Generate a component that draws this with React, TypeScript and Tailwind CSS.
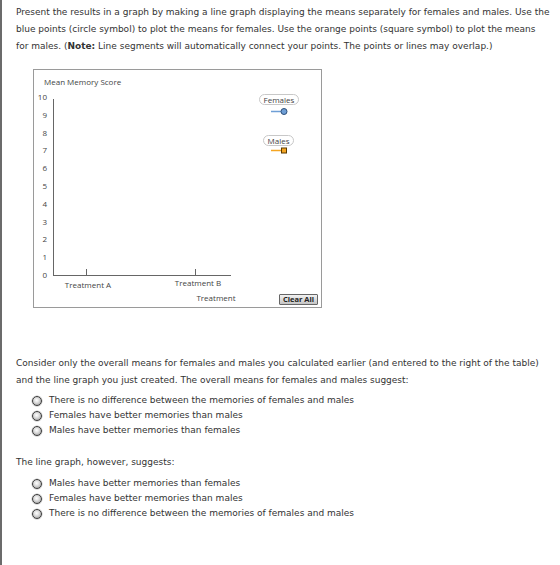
import React from "react";

const body = { fontFamily: '"DejaVu Sans", Verdana, sans-serif' };
const chartFont = '"Open Sans", "DejaVu Sans", sans-serif';

function Radio({ label }: { label: string }) {
  return (
    <label className="flex items-center h-[15px] pl-[16px]">
      <span className="w-[10px] h-[10px] rounded-full border border-[#3c3c3c] bg-[radial-gradient(circle_at_45%_40%,#ffffff_0%,#dcdcdc_40%,#8e8e8e_100%)] shadow-[0_0_0_0.5px_#bbbbbb] shrink-0" />
      <span className="ml-[7px]">{label}</span>
    </label>
  );
}

function Chart() {
  const ys = [0, 1, 2, 3, 4, 5, 6, 7, 8, 9, 10];
  const y0 = 205;
  const step = 17.8;
  return (
    <div className="relative ml-[31px] w-[289px] h-[239px] border border-[#9a9a9a] bg-white">
      <svg width="287" height="237" className="absolute left-0 top-0" style={{ fontFamily: chartFont }}>
        <text x="10" y="15" fontSize="8" fill="#444">Mean Memory Score</text>
        {ys.map((v) => (
          <text key={v} x="13" y={y0 - v * step + 3} fontSize="8" fill="#444" textAnchor="end">
            {v}
          </text>
        ))}
        <line x1="19.5" y1="29" x2="19.5" y2="205" stroke="#666" strokeWidth="1" />
        <line x1="19" y1="205.5" x2="197" y2="205.5" stroke="#666" strokeWidth="1" />
        <line x1="52.5" y1="199" x2="52.5" y2="205" stroke="#666" strokeWidth="1" />
        <line x1="161.5" y1="199" x2="161.5" y2="205" stroke="#666" strokeWidth="1" />
        <text x="54" y="218" fontSize="8" fill="#444" textAnchor="middle">Treatment A</text>
        <text x="164" y="216" fontSize="8" fill="#444" textAnchor="middle">Treatment B</text>
        <text x="182" y="231" fontSize="8" fill="#444" textAnchor="middle">Treatment</text>
        {/* legend markers */}
        <line x1="237" y1="41.5" x2="250" y2="41.5" stroke="#6f9fd6" strokeWidth="1.5" />
        <circle cx="250" cy="41.5" r="3" fill="#6f9fd6" stroke="#2d4f7a" strokeWidth="1" />
        <line x1="237" y1="80.5" x2="250" y2="80.5" stroke="#f5a623" strokeWidth="1.5" />
        <rect x="247.5" y="78" width="5" height="5" fill="#f5a623" stroke="#5a3a00" strokeWidth="1" />
      </svg>
      <div
        className="absolute left-[225px] top-[24px] w-[40px] h-[11px] rounded-[6px] border border-[#c8c8c8] flex items-center justify-center text-[8px] text-[#444] leading-none"
        style={{ fontFamily: chartFont }}
      >
        Females
      </div>
      <div
        className="absolute left-[229px] top-[65px] w-[31px] h-[11px] rounded-[6px] border border-[#c8c8c8] flex items-center justify-center text-[8px] text-[#444] leading-none"
        style={{ fontFamily: chartFont }}
      >
        Males
      </div>
      <button
        className="absolute left-[245px] top-[224px] w-[39px] h-[11px] border border-[#666] rounded-[1px] bg-[linear-gradient(#f2f2f2,#c4c4c4)] text-[7.5px] font-bold text-[#222] leading-none flex items-center justify-center"
        style={{ fontFamily: chartFont }}
      >
        Clear All
      </button>
    </div>
  );
}

export default function App() {
  return (
    <div className="w-[560px] h-[565px] bg-white border-l-2 border-[#6b6b6b] text-[9px] leading-[17px] text-[#333]" style={body}>
      <div className="pl-[14px] pr-[10px] pt-[4px]">
        <p>
          Present the results in a graph by making a line graph displaying the means separately for females and males. Use the blue points (circle symbol) to plot the means for females. Use the orange points (square symbol) to plot the means for males. (<b>Note:</b> Line segments will automatically connect your points. The points or lines may overlap.)
        </p>
      </div>
      <div className="mt-[14px]">
        <Chart />
      </div>
      <div className="pl-[14px] pr-[10px] mt-[47px]">
        <p>
          Consider only the overall means for females and males you calculated earlier (and entered to the right of the table) and the line graph you just created. The overall means for females and males suggest:
        </p>
        <div className="mt-[4px] flex flex-col">
          <Radio label="There is no difference between the memories of females and males" />
          <Radio label="Females have better memories than males" />
          <Radio label="Males have better memories than females" />
        </div>
        <p className="mt-[16px]">The line graph, however, suggests:</p>
        <div className="mt-[5px] flex flex-col">
          <Radio label="Males have better memories than females" />
          <Radio label="Females have better memories than males" />
          <Radio label="There is no difference between the memories of females and males" />
        </div>
      </div>
    </div>
  );
}
